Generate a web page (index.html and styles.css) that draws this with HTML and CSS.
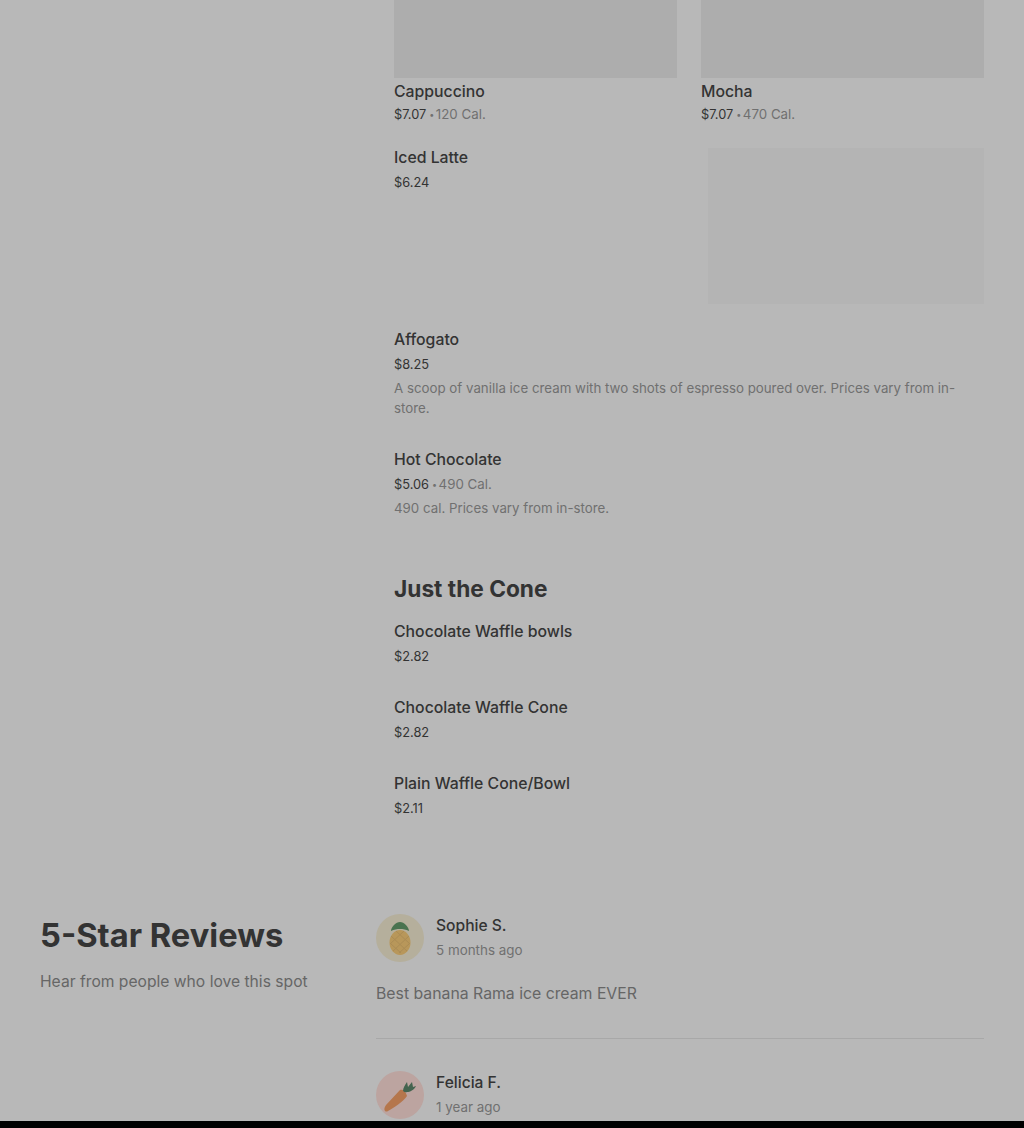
FILE: index.html
```html
<!DOCTYPE html>
<html lang="en">
<head>
  <meta charset="UTF-8">
  <title>Menu and reviews</title>
  <link rel="stylesheet" href="styles.css">
</head>
<body>
  <div class="page">
    <section class="menu">
      <div class="card-row">
        <div class="card">
          <div class="card-img"></div>
          <div class="card-name">Cappuccino</div>
          <div class="card-meta"><span class="price">$7.07</span><span class="dot">•</span>120 Cal.</div>
        </div>
        <div class="card">
          <div class="card-img"></div>
          <div class="card-name">Mocha</div>
          <div class="card-meta"><span class="price">$7.07</span><span class="dot">•</span>470 Cal.</div>
        </div>
      </div>

      <div class="item item-photo">
        <div class="item-text">
          <div class="item-name">Iced Latte</div>
          <div class="item-meta"><span class="price">$6.24</span></div>
        </div>
        <div class="item-img"></div>
      </div>

      <div class="item item-affogato">
        <div class="item-name">Affogato</div>
        <div class="item-meta"><span class="price">$8.25</span></div>
        <p class="item-desc">A scoop of vanilla ice cream with two shots of espresso poured over. Prices vary from in-store.</p>
      </div>

      <div class="item item-hot">
        <div class="item-name">Hot Chocolate</div>
        <div class="item-meta"><span class="price">$5.06</span><span class="dot">•</span>490 Cal.</div>
        <p class="item-desc">490 cal. Prices vary from in-store.</p>
      </div>

      <h2 class="menu-title">Just the Cone</h2>

      <div class="item item-small">
        <div class="item-name">Chocolate Waffle bowls</div>
        <div class="item-meta"><span class="price">$2.82</span></div>
      </div>
      <div class="item item-small">
        <div class="item-name">Chocolate Waffle Cone</div>
        <div class="item-meta"><span class="price">$2.82</span></div>
      </div>
      <div class="item item-small">
        <div class="item-name">Plain Waffle Cone/Bowl</div>
        <div class="item-meta"><span class="price">$2.11</span></div>
      </div>
    </section>

    <section class="reviews">
      <div class="reviews-head">
        <h2>5-Star Reviews</h2>
        <p>Hear from people who love this spot</p>
      </div>
      <div class="reviews-list">
        <div class="review">
          <div class="review-top">
            <div class="avatar avatar-pine">
              <svg width="48" height="48" viewBox="0 0 48 48">
                <ellipse cx="24" cy="28.500" rx="10.500" ry="12.500" fill="#b8975a"/>
                <path d="M15 22l16 15M15 30l10 9M20 17l14 13M33 22L17 37M33 30l-10 9M28 17L14 30" stroke="#ab8c55" stroke-width="1" fill="none"/>
                <path d="M15 17c0-4 5-9 9-9s9 5 9 9c-3-1.500-6-2-9-2s-6 .5-9 2z" fill="#4a7350"/>
              </svg>
            </div>
            <div>
              <div class="review-name">Sophie S.</div>
              <div class="review-date">5 months ago</div>
            </div>
          </div>
          <p class="review-text">Best banana Rama ice cream EVER</p>
        </div>
        <div class="review">
          <div class="review-top">
            <div class="avatar avatar-carrot">
              <svg width="48" height="48" viewBox="0 0 48 48">
                <path d="M9 40c-1-1-1-3 1-6l14-15c3-1 6 2 7 6-3 5-15 13-19 15-1 .6-2 .8-3 0z" fill="#b5764c"/>
                <path d="M27 20c0-3 2-6 4-9l1 5 4-5 1 5 3-1c-2 4-6 6-9 6 0 0-2 1-4-1z" fill="#44644f"/>
              </svg>
            </div>
            <div>
              <div class="review-name">Felicia F.</div>
              <div class="review-date">1 year ago</div>
            </div>
          </div>
        </div>
      </div>
    </section>
  </div>
  <div class="bottom-bar"></div>
</body>
</html>
```

FILE: styles.css
```css
body {
  margin: 0;
  height: 1128px;
  overflow: hidden;
  background: #b8b8b8;
  font-family: "Inter", "Liberation Sans", sans-serif;
  color: #333;
}

.page {
  height: 1121px;
  overflow: hidden;
  padding: 0 40px;
}

.menu {
  margin-left: 354px;
}

.card-row {
  display: flex;
  gap: 24px;
}

.card {
  width: 283px;
}

.card-img {
  height: 78px;
  background: #adadad;
}

.card-name {
  margin-top: 4px;
  font-size: 15.8px;
  line-height: 20px;
  font-weight: 500;
}

.card-meta {
  margin-top: 2px;
  font-size: 13.3px;
  line-height: 20px;
  color: #707070;
}

.price {
  color: #333;
  font-size: 12.8px;
  line-height: 1;
}

.dot {
  margin: 0 1.500px 0 3px;
  font-size: 9px;
  line-height: 1;
  vertical-align: 1px;
}

.item-photo {
  display: flex;
  justify-content: space-between;
  margin-top: 21px;
  height: 159px;
}

.item-img {
  width: 276px;
  height: 156px;
  margin-top: 3px;
  background: #b4b4b4;
}

.item-name {
  margin-top: 1px;
  font-size: 15.8px;
  line-height: 24px;
  font-weight: 500;
}

.item-meta {
  font-size: 13.3px;
  line-height: 24px;
  color: #707070;
}

.item-desc {
  margin: 2px 0 0;
  font-size: 13.3px;
  line-height: 20px;
  color: #707070;
}

.item-affogato {
  margin-top: 24px;
}

.item-hot {
  margin-top: 30px;
}

.menu-title {
  margin: 55px 0 0;
  font-size: 22.7px;
  line-height: 32px;
  font-weight: 700;
}

.item-small {
  height: 52px;
  margin-top: 24px;
}

.menu-title + .item-small {
  margin-top: 15px;
}

.reviews {
  display: flex;
  margin-top: 89px;
}

.reviews-head {
  width: 336px;
}

.reviews-head h2 {
  margin: 0;
  font-size: 32.7px;
  line-height: 44px;
  font-weight: 700;
}

.reviews-head p {
  margin: 13px 0 0;
  font-size: 15.65px;
  line-height: 24px;
  color: #666;
}

.reviews-list {
  width: 608px;
}

.review {
  padding-bottom: 32px;
  margin-bottom: 31px;
  border-bottom: 1px solid #a8a8a8;
}

.review:last-child {
  border-bottom: none;
}

.review-top {
  display: flex;
  align-items: center;
  gap: 12px;
}

.avatar {
  width: 48px;
  height: 48px;
  border-radius: 50%;
}

.avatar-pine {
  background: #b5af9c;
}

.avatar-carrot {
  background: #bca4a0;
}

.review-name {
  margin-top: 1px;
  font-size: 15.6px;
  line-height: 24px;
  font-weight: 500;
}

.review-date {
  font-size: 13.4px;
  line-height: 24px;
  color: #707070;
}

.review-text {
  margin: 20px 0 0;
  font-size: 15.8px;
  line-height: 24px;
  color: #666;
}

.bottom-bar {
  height: 7px;
  background: #000;
}
```
